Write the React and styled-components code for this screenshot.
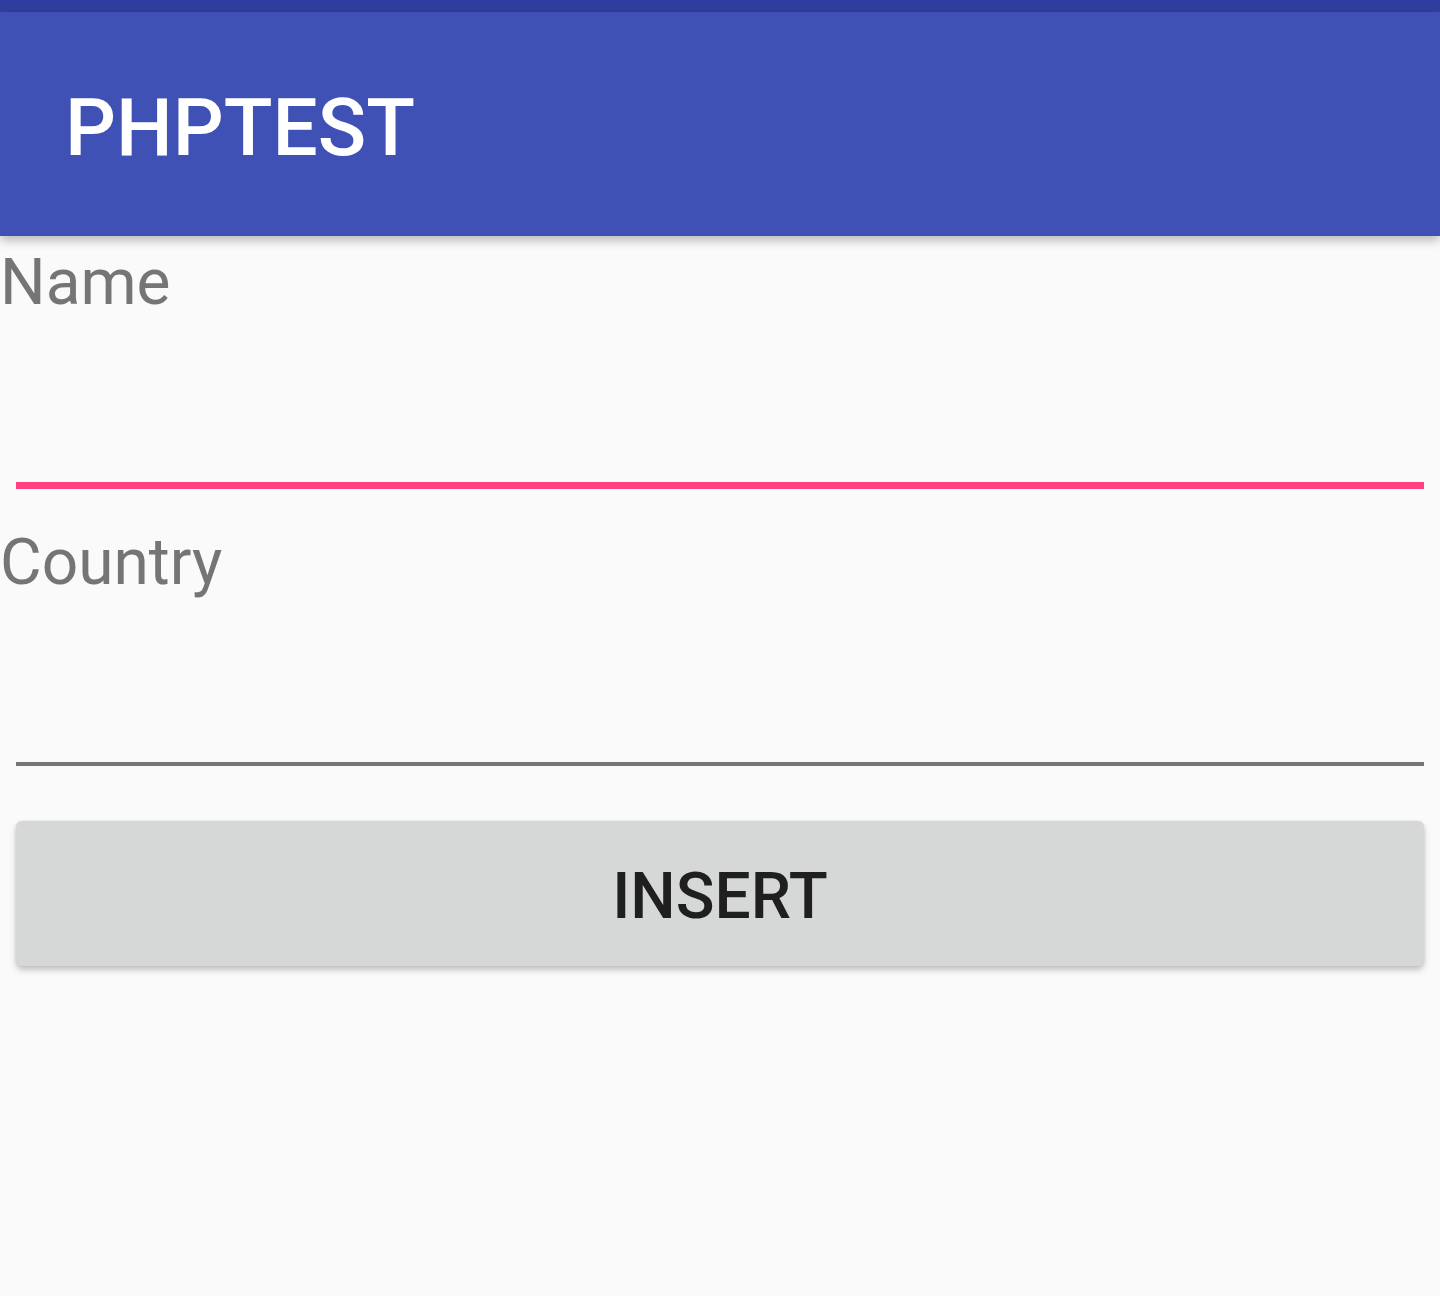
import React, { useState } from 'react';
import styled, { createGlobalStyle } from 'styled-components';

const GlobalStyle = createGlobalStyle`
  html, body {
    margin: 0;
    padding: 0;
    background: #fafafa;
  }
  body {
    font-family: Roboto, "Noto Sans", "Liberation Sans", sans-serif;
  }
`;

const Screen = styled.div`
  display: flex;
  flex-direction: column;
  width: 1440px;
  min-height: 1296px;
  background: #fafafa;
`;

const StatusBar = styled.div`
  height: 12px;
  background: #303f9f;
`;

const AppBar = styled.header`
  position: relative;
  z-index: 1;
  height: 224px;
  box-sizing: border-box;
  padding: 76px 0 0 65px;
  background: #3f51b5;
  box-shadow: 0 4px 10px rgba(0, 0, 0, 0.28);
`;

const Title = styled.h1`
  margin: 0;
  font-size: 80px;
  line-height: 80px;
  font-weight: 500;
  color: #ffffff;
`;

const Form = styled.main`
  display: flex;
  flex-direction: column;
  padding-top: 15px;
`;

const Label = styled.label`
  display: block;
  margin-top: ${(p) => p.$gap || 0}px;
  font-size: 64px;
  line-height: 64px;
  color: #757575;
`;

const Field = styled.input`
  display: block;
  box-sizing: border-box;
  width: calc(100% - 32px);
  height: ${(p) => p.$height}px;
  margin: 0 16px;
  padding: 0;
  border: none;
  border-bottom: ${(p) => (p.$focused ? '7px solid #ff4081' : '4px solid #757575')};
  background: transparent;
  outline: none;
  font-family: inherit;
  font-size: 64px;
  color: #212121;
`;

const Button = styled.button`
  display: flex;
  align-items: center;
  justify-content: center;
  box-sizing: border-box;
  height: 145px;
  margin: 55px 16px 0;
  padding: 7px 0 0;
  border: none;
  border-radius: 6px;
  background: #d6d7d7;
  box-shadow: 0 4px 6px rgba(0, 0, 0, 0.22), 0 0 3px rgba(0, 0, 0, 0.08);
  font-family: inherit;
  font-size: 64px;
  line-height: 64px;
  font-weight: 500;
  color: #1f1f1f;
  cursor: pointer;
`;

function App() {
  const [name, setName] = useState('');
  const [country, setCountry] = useState('');

  return (
    <Screen>
      <GlobalStyle />
      <StatusBar />
      <AppBar>
        <Title>PHPTEST</Title>
      </AppBar>
      <Form>
        <Label htmlFor="name">Name</Label>
        <Field id="name" $height={174} $focused value={name} onChange={(e) => setName(e.target.value)} />
        <Label htmlFor="country" $gap={42}>Country</Label>
        <Field id="country" $height={171} value={country} onChange={(e) => setCountry(e.target.value)} />
        <Button>INSERT</Button>
      </Form>
    </Screen>
  );
}

export default App;
